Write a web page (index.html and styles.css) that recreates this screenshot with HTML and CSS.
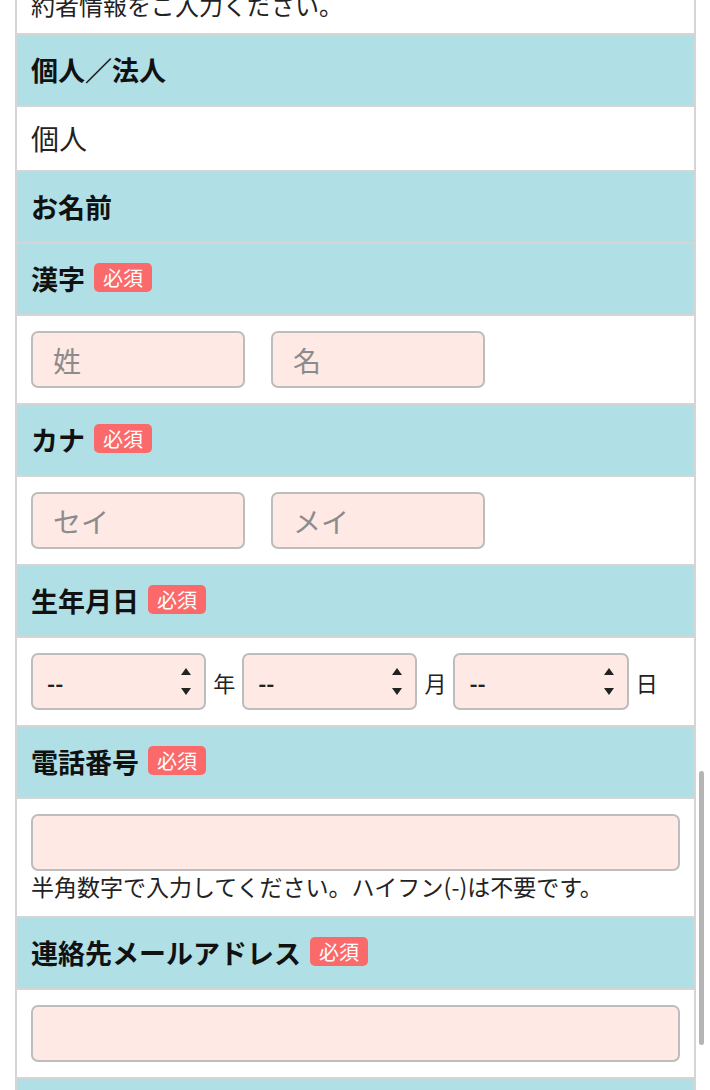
FILE: index.html
```html
<!DOCTYPE html>
<html lang="ja">
<head>
    <meta charset="UTF-8">
    <meta name="viewport" content="width=device-width, initial-scale=1.0">
    <title>ご契約者情報の入力</title>
    <link rel="stylesheet" href="styles.css">
</head>
<body>
    <div class="form-box">
        <div class="row intro">
            以下のフォームに沿って、ご契<br>約者情報をご入力ください。
        </div>

        <div class="row head">個人／法人</div>
        <div class="row value">個人</div>

        <div class="row head">お名前</div>
        <div class="row head">漢字<span class="req">必須</span></div>
        <div class="row field pair">
            <input type="text" class="half" placeholder="姓">
            <input type="text" class="half" placeholder="名">
        </div>

        <div class="row head">カナ<span class="req">必須</span></div>
        <div class="row field pair">
            <input type="text" class="half" placeholder="セイ">
            <input type="text" class="half" placeholder="メイ">
        </div>

        <div class="row head">生年月日<span class="req">必須</span></div>
        <div class="row field date">
            <span class="select-wrap">
                <select><option>--</option></select>
                <svg class="arrows" width="10" height="27" viewBox="0 0 10 27"><path d="M5 0 L10 7 L0 7 Z M0 20 L10 20 L5 27 Z" fill="#222"/></svg>
            </span>
            <span class="unit">年</span>
            <span class="select-wrap">
                <select><option>--</option></select>
                <svg class="arrows" width="10" height="27" viewBox="0 0 10 27"><path d="M5 0 L10 7 L0 7 Z M0 20 L10 20 L5 27 Z" fill="#222"/></svg>
            </span>
            <span class="unit">月</span>
            <span class="select-wrap">
                <select><option>--</option></select>
                <svg class="arrows" width="10" height="27" viewBox="0 0 10 27"><path d="M5 0 L10 7 L0 7 Z M0 20 L10 20 L5 27 Z" fill="#222"/></svg>
            </span>
            <span class="unit">日</span>
        </div>

        <div class="row head">電話番号<span class="req">必須</span></div>
        <div class="row field">
            <input type="tel" class="full">
            <p class="hint">半角数字で入力してください。ハイフン(-)は不要です。</p>
        </div>

        <div class="row head">連絡先メールアドレス<span class="req">必須</span></div>
        <div class="row field">
            <input type="email" class="full">
        </div>

        <div class="row head">連絡先メールアドレス（確認用）<span class="req">必須</span></div>
        <div class="row field">
            <input type="email" class="full">
        </div>
    </div>

    <div class="scroll-thumb"></div>
</body>
</html>
```

FILE: styles.css
```css
:root {
    --head-color: #b0dfe5;
    --line-color: #d5d5d5;
    --input-bg: #fee9e5;
    --input-border: #bdbdbd;
    --req-color: #fb6a6a;
    --text-color: #111111;
}
html, body {
    overflow: hidden;
    height: 100%;
}
body {
    margin: 0;
    font-family: "Noto Sans CJK JP", "Noto Sans", sans-serif;
    color: var(--text-color);
    background-color: #ffffff;
}
.form-box {
    margin: -59px 14px 0 15px;
    border-left: 2px solid var(--line-color);
    border-right: 2px solid var(--line-color);
}
.row {
    border-bottom: 2px solid var(--line-color);
    padding: 0 14px;
}
.intro {
    padding-top: 10px;
    padding-bottom: 10px;
    font-size: 24px;
    line-height: 36px;
    color: #222;
}
.head {
    background-color: var(--head-color);
    font-size: 27px;
    font-weight: bold;
    line-height: 42px;
    padding-top: 14px;
    padding-bottom: 14px;
}
.value {
    font-size: 28px;
    line-height: 42px;
    padding-top: 10px;
    padding-bottom: 11px;
    color: #222;
}
.req {
    display: inline-block;
    vertical-align: 4px;
    margin-left: 9px;
    padding: 0 9px;
    height: 29px;
    line-height: 29px;
    font-size: 20px;
    font-weight: normal;
    color: #ffffff;
    background-color: var(--req-color);
    border-radius: 5px;
}
.field {
    padding-top: 15px;
    padding-bottom: 15px;
}
.pair {
    display: flex;
    gap: 4%;
}
input {
    box-sizing: border-box;
    height: 57px;
    padding: 0 20px;
    border: 2px solid var(--input-border);
    border-radius: 7px;
    background-color: var(--input-bg);
    font-family: inherit;
    font-size: 28px;
    color: #222;
    outline: none;
}
input::placeholder {
    color: #8c8c8c;
}
.half {
    width: 33%;
}
.full {
    display: block;
    width: 100%;
}
.hint {
    margin: 0;
    font-size: 23px;
    line-height: 30px;
    color: #222;
}
.date {
    display: flex;
    align-items: center;
}
.select-wrap {
    position: relative;
    width: 27%;
}
.select-wrap select {
    -webkit-appearance: none;
    appearance: none;
    box-sizing: border-box;
    width: 100%;
    height: 57px;
    padding: 0 14px;
    border: 2px solid var(--input-border);
    border-radius: 7px;
    background-color: var(--input-bg);
    font-family: inherit;
    font-size: 22px;
    font-weight: bold;
    color: #222;
}
.arrows {
    position: absolute;
    right: 15px;
    top: 15px;
    pointer-events: none;
}
.unit {
    margin: 0 7px;
    font-size: 22px;
    color: #222;
}
.scroll-thumb {
    position: fixed;
    left: 699px;
    top: 771px;
    width: 5px;
    height: 274px;
    border-radius: 3px;
    background-color: #b5b5b5;
}
```
